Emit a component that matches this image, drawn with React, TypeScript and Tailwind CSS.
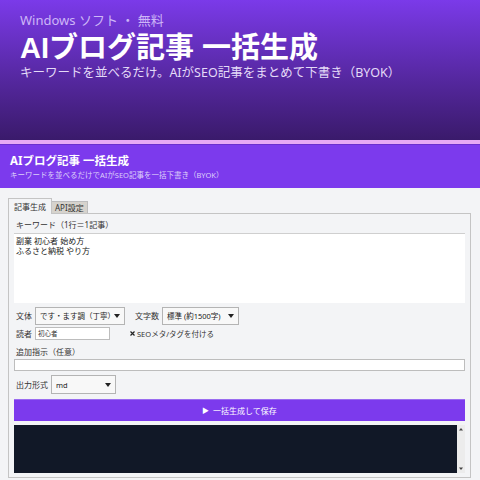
const font = "font-['Noto_Sans','Noto_Sans_CJK_JP',sans-serif]"

const Caret = () => (
  <svg width="6" height="4" viewBox="0 0 6 4" className="shrink-0">
    <path d="M0 0 L6 0 L3 4 Z" fill="#222" />
  </svg>
)

const Select = ({ value, className }: { value: string; className: string }) => (
  <div
    className={`flex items-center justify-between border border-[#b4b4b4] bg-[#f8f8f8] pl-[4px] pr-[4px] text-[7.5px] leading-[10px] text-[#222] ${className}`}
  >
    <span>{value}</span>
    <Caret />
  </div>
)

const Label = ({ children }: { children: string }) => (
  <div className="shrink-0 text-[8px] leading-[12px] text-[#333]">{children}</div>
)

export default function App() {
  return (
    <div className={`flex h-[480px] w-[480px] flex-col overflow-hidden ${font}`}>
      <header className="h-[140px] shrink-0 bg-linear-to-b from-[#7b3ae9] to-[#3a1a6b] px-5 pt-[12px]">
        <p className="text-[13px] leading-[16px] text-[#cdb6f7]">Windows ソフト ・ 無料</p>
        <h1 className="mt-[4px] font-['Liberation_Sans','Noto_Sans_CJK_JP',sans-serif] text-[29px] font-bold leading-[32px] text-white">
          AIブログ記事 一括生成
        </h1>
        <p className="mt-[1px] text-[12.5px] leading-[16px] text-[#e4dbf8]">
          キーワードを並べるだけ。AIがSEO記事をまとめて下書き（BYOK）
        </p>
      </header>

      <div className="h-[4px] shrink-0 bg-[#e6a9f5]" />

      <div className="h-[44px] shrink-0 border-t border-[#6a2fcf] bg-[#7c3aed] px-[10px] pt-[8px]">
        <p className="text-[11.5px] font-bold leading-[16px] text-white">AIブログ記事 一括生成</p>
        <p className="mt-[1px] text-[7.5px] leading-[10px] text-[#ddd0fa]">
          キーワードを並べるだけでAIがSEO記事を一括下書き（BYOK）
        </p>
      </div>

      <div className="flex-1 bg-[#f3f4f6] px-2 pt-[10px] text-[8px] leading-[12px]">
        <div className="flex h-[15px] items-end">
          <div className="relative z-10 -mb-px flex h-[16px] items-center border border-b-0 border-[#c4c4c4] bg-[#f3f4f6] px-[5px] text-[8px] text-[#333]">
            記事生成
          </div>
          <div className="flex h-[12px] items-center border border-b-0 border-l-0 border-[#bdbdbd] bg-[#d6d3cd] px-[3px] text-[8px] text-[#333]">
            API設定
          </div>
        </div>

        <div className="flex w-[463px] flex-col border border-[#c4c4c4] px-[5px] pb-[4px] pt-[5px]">
          <div className="pl-[2px]">
            <Label>キーワード（1行＝1記事）</Label>
          </div>
          <div className="mt-[2px] h-[70px] border-t border-[#cfcfcf] bg-white px-[2px] pt-[2px] text-[8px] leading-[10px] text-[#222]">
            <p>副業 初心者 始め方</p>
            <p>ふるさと納税 やり方</p>
          </div>

          <div className="mt-[4px] flex h-[18px] items-center pl-[2px]">
            <Label>文体</Label>
            <Select value="です・ます調（丁寧）" className="ml-[3px] h-[18px] w-[90px]" />
            <div className="ml-[10px]">
              <Label>文字数</Label>
            </div>
            <Select value="標準 (約1500字)" className="ml-[3px] h-[18px] w-[77px]" />
          </div>

          <div className="mt-[2px] flex h-[13px] items-center pl-[2px]">
            <Label>読者</Label>
            <div className="ml-[3px] flex h-[13px] w-[75px] items-center border border-[#bdbdbd] bg-white px-[2px] text-[6.5px] leading-[10px] text-[#333]">
              初心者
            </div>
            <div className="ml-[20px] flex items-center gap-[2px]">
              <svg width="5" height="5" viewBox="0 0 5 5">
                <path d="M0.5 0.5 L4.5 4.5 M4.5 0.5 L0.5 4.5" stroke="#222" strokeWidth="1.2" />
              </svg>
              <span className="text-[7.5px] leading-[12px] text-[#333]">SEOメタ/タグを付ける</span>
            </div>
          </div>

          <div className="mt-[6px] pl-[2px]">
            <Label>追加指示（任意）</Label>
          </div>
          <div className="mt-px h-[12px] border border-[#bdbdbd] bg-white" />

          <div className="mt-[4px] flex h-[19px] items-center pl-[2px]">
            <Label>出力形式</Label>
            <Select value="md" className="ml-[3px] h-[19px] w-[65px]" />
          </div>

          <div className="mt-[5px] flex h-[22px] items-center justify-center gap-[4px] border-t border-[#9a6cf0] bg-[#7c3aed] text-[8px] text-white">
            <span className="text-[7px]">▶</span>
            <span>一括生成して保存</span>
          </div>

          <div className="mt-[4px] flex h-[48px] bg-[#111827]">
            <div className="flex-1" />
            <div className="flex w-[8px] flex-col justify-between bg-[#ececec] py-[2px]">
              <svg width="8" height="4" viewBox="0 0 8 4">
                <path d="M2 3.5 L6 3.5 L4 1 Z" fill="#444" />
              </svg>
              <svg width="8" height="4" viewBox="0 0 8 4">
                <path d="M2 0.5 L6 0.5 L4 3 Z" fill="#444" />
              </svg>
            </div>
          </div>
        </div>
      </div>
    </div>
  )
}
